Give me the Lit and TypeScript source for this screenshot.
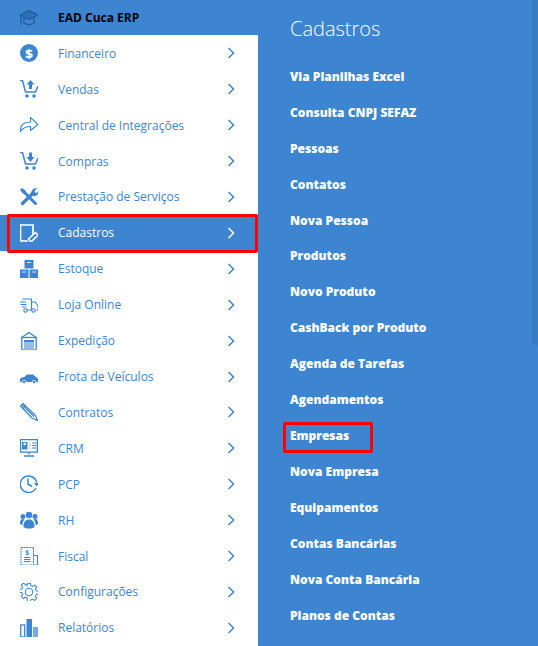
import { LitElement, html, css, svg } from "lit";
import { customElement } from "lit/decorators.js";

const B = "#3d85d1";
const icons: Record<string, unknown> = {
  cap: svg`<g fill="none" stroke="#1f5c9e" stroke-width="1.300"><path d="M1 7 10 2.500 19 7l-9 4.500z" fill="#2f6fb5"/><path d="M5 10v5c3 2 7 2 10 0V10"/><path d="M2 8v9"/></g>`,
  dollar: svg`<circle cx="10" cy="10" r="9" fill="${B}"/><text x="10" y="14.500" text-anchor="middle" font-family="Open Sans" font-weight="800" font-size="13" fill="#fff">$</text>`,
  cartUp: svg`<g fill="none" stroke="${B}" stroke-width="1.500"><path d="M1 1.500h2.500l3 11.500h10L19 7"/></g><path d="M11.500 1 7.500 5.500H10V10h3V5.500h2.500z" fill="${B}"/><circle cx="8" cy="17" r="1.800" fill="${B}"/><circle cx="15" cy="17" r="1.800" fill="${B}"/>`,
  cartDown: svg`<g fill="none" stroke="${B}" stroke-width="1.500"><path d="M1 1.500h2.500l3 11.500h10L19 7"/></g><path d="M11.500 11 7.500 6H10V1.500h3V6h2.500z" fill="${B}"/><circle cx="8" cy="17" r="1.800" fill="${B}"/><circle cx="15" cy="17" r="1.800" fill="${B}"/>`,
  share: svg`<path d="M1 17C1 10.500 5 7 11.500 7V2.500L19 9.500 11.500 15.500V11.500C6.500 11.500 3.500 13 1 17Z" fill="none" stroke="${B}" stroke-width="1.100" stroke-linejoin="round"/>`,
  tools: svg`<g stroke="${B}" fill="none" stroke-linecap="round"><path d="M3.500 16.500 14 6" stroke-width="3.200"/><path d="M4 4l12.500 12.500" stroke-width="3"/></g><path d="M12.500 6.500C12 3 15 .5 18 1.500L15.500 4l.5 1.500 1.500.5L19.500 3.500c1 3-2 6.500-5 5.500zM1 3l2-2 4 3-1 2-2 .5z" fill="${B}"/>`,
  edit: svg`<g fill="none" stroke="#fff" stroke-width="1.700"><path d="M14 12V2H1.500v16H9"/><path d="M11.500 18.500l-2-2.500 7-6.500 2.500 2.500-6.500 6.500z" stroke-linejoin="round"/></g>`,
  boxes: svg`<g fill="${B}"><rect x="5.500" y="1" width="9" height="8.500"/><rect x="1" y="10.500" width="8.500" height="8.500"/><rect x="10.500" y="10.500" width="8.500" height="8.500"/></g><g stroke="#d6e6f7"><path d="M8 3.500h4M3 13h4M13 13h4"/></g>`,
  truck: svg`<g fill="none" stroke="${B}" stroke-width="1.100"><path d="M3.500 4h9v11H8M12.500 7h3.500l3 3.500V15h-1.500M12.500 15H12"/><path d="M1 7h6M1.500 9.500h6M3 12h4"/><circle cx="6.500" cy="15.500" r="1.700"/><circle cx="14.500" cy="15.500" r="1.700"/></g>`,
  garage: svg`<g fill="none" stroke="${B}" stroke-width="1.300"><path d="M2 7 10 1.500 18 7"/><rect x="2.800" y="6.500" width="14.400" height="12.500"/></g><rect x="5" y="9" width="10" height="2.500" fill="${B}"/><rect x="5" y="12" width="10" height="6" fill="${B}" opacity=".55"/>`,
  car: svg`<path d="M1 15v-2.500C1 11 3 10.500 5 10.300L8 7.500h6l3.500 3c1.500.3 1.500 1 1.500 2V15z" fill="${B}"/><circle cx="5" cy="15" r="1.700" fill="${B}" stroke="#fff" stroke-width=".7"/><circle cx="15" cy="15" r="1.700" fill="${B}" stroke="#fff" stroke-width=".7"/>`,
  pen: svg`<g fill="none" stroke="${B}" stroke-width="1.200" stroke-linejoin="round"><path d="M1.500 4 4 1.500 16 13l3 6-6-3z"/><path d="M3.500 7 6.500 4M3 2.800 15 14.500"/></g>`,
  crm: svg`<g fill="none" stroke="${B}" stroke-width="1.300"><rect x="1.600" y="1.600" width="16.800" height="12.500"/><path d="M10 14v2.500M5 18h10"/></g><rect x="3" y="4" width="5.500" height="7.500" fill="${B}"/><circle cx="5.700" cy="6" r="1.300" fill="#fff"/><path d="M10.500 5h1M13 5h4.500M10.500 7.500h1M13 7.500h4.500M10.500 10h1M13 10h4.500" stroke="${B}"/>`,
  clock: svg`<g fill="none" stroke="${B}" stroke-width="1.500"><path d="M17.700 8.500A8.300 8.300 0 1 0 17 14"/><path d="M9 4.500V10l4 2.500"/></g><path d="M15 9h5l-2.500 3.500z" fill="${B}"/>`,
  users: svg`<g fill="${B}"><circle cx="10" cy="5" r="3.200"/><circle cx="4" cy="6.500" r="2.500"/><circle cx="16" cy="6.500" r="2.500"/><path d="M4.500 17c0-5.500 2-7.500 5.500-7.500s5.500 2 5.500 7.500c-3 2-8 2-11 0z"/><path d="M1 14c0-3.500.8-5 2.700-5 .8 0 1.300.2 1.800.5C4 11 3.500 12.500 3.500 15 2.500 15 1.800 14.700 1 14zM19 14c0-3.500-.8-5-2.700-5-.8 0-1.300.2-1.800.5 1.500 1.500 2 3 2 5.500 1 0 1.700-.3 2.500-1z"/></g>`,
  fiscal: svg`<g fill="none" stroke="${B}" stroke-width="1"><path d="M2 1.500h12.500v17.500H2z" stroke-dasharray="2 .6"/><path d="M14.500 9.500h4v9.500h-4"/><path d="M5 11.500h6.500M5 13.500h6.500M5 15.500h6.500"/></g><text x="8.200" y="9" text-anchor="middle" font-size="6.500" font-family="Open Sans" font-weight="700" fill="${B}">$</text>`,
  gear: svg`<g fill="none" stroke="${B}" stroke-width="1.100"><circle cx="10" cy="10" r="3.700"/><path d="M8.500 1h3l.5 2.500 1.800.8 2.200-1.400 2.100 2.100-1.400 2.200.8 1.800 2.500.5v3l-2.500.5-.8 1.800 1.400 2.200-2.100 2.100-2.200-1.400-1.800.8-.5 2.500h-3L8 16.500l-1.800-.8L4 17.100 1.900 15l1.400-2.200-.8-1.800L0 10.500v-3l2.500-.5.8-1.800L1.900 3 4 .9l2.200 1.400L8 3.500z" transform="translate(.5 .3) scale(.95)"/></g>`,
  bars: svg`<rect x="1.700" y="7" width="4" height="12" fill="none" stroke="${B}" stroke-width="1.300"/><rect x="7.500" y="1" width="5.500" height="18" fill="${B}"/><rect x="14" y="9" width="5" height="10" fill="${B}" opacity=".7"/>`,
};

const menu: [string, string][] = [
  ["dollar", "Financeiro"],
  ["cartUp", "Vendas"],
  ["share", "Central de Integrações"],
  ["cartDown", "Compras"],
  ["tools", "Prestação de Serviços"],
  ["edit", "Cadastros"],
  ["boxes", "Estoque"],
  ["truck", "Loja Online"],
  ["garage", "Expedição"],
  ["car", "Frota de Veículos"],
  ["pen", "Contratos"],
  ["crm", "CRM"],
  ["clock", "PCP"],
  ["users", "RH"],
  ["fiscal", "Fiscal"],
  ["gear", "Configurações"],
  ["bars", "Relatórios"],
];

const sub = [
  "Via Planilhas Excel", "Consulta CNPJ SEFAZ", "Pessoas", "Contatos", "Nova Pessoa",
  "Produtos", "Novo Produto", "CashBack por Produto", "Agenda de Tarefas", "Agendamentos",
  "Empresas", "Nova Empresa", "Equipamentos", "Contas Bancárias", "Nova Conta Bancária", "Planos de Contas",
];

@customElement("app-root")
export class AppRoot extends LitElement {
  static styles = css`
    :host {
      display: block;
      width: 538px;
      height: 646px;
      overflow: hidden;
      font-family: "Open Sans", sans-serif;
    }
    .page {
      display: grid;
      grid-template-columns: 258px 1fr;
      height: 646px;
    }
    .side {
      background: #fff;
      display: flex;
      flex-direction: column;
    }
    .head {
      height: 35px;
      margin-bottom: 0.4px;
      flex: none;
      background: #3d85d1;
      display: flex;
      align-items: center;
      padding-left: 20px;
      box-sizing: border-box;
    }
    .head svg { width: 18px; height: 18px; margin-right: 20px; flex: none; }
    .head span { font-size: 12px; font-weight: 700; color: #000; }
    .row {
      height: 35.91px;
      flex: none;
      display: flex;
      align-items: center;
      padding-left: 20px;
      box-sizing: border-box;
      color: #3d85d1;
      font-size: 12px;
      position: relative;
    }
    .row svg.ic { width: 18px; height: 18px; margin-right: 20px; flex: none; }
    .row.on { background: #3d85d1; color: #fff; }
    .chev {
      position: absolute;
      left: 226.5px;
      top: 50%;
      margin-top: -6px;
      width: 8px;
      height: 12px;
      fill: none;
      stroke: currentColor;
      stroke-width: 1.5;
    }
    .outline {
      position: absolute;
      left: 7px;
      top: -1.4px;
      width: 251px;
      height: 39px;
      border: 3px solid #f00;
      border-radius: 2px;
      box-sizing: border-box;
    }
    .panel {
      background: #3d85d1;
      padding: 15px 0 0 32px;
      box-sizing: border-box;
      position: relative;
      overflow: hidden;
    }
    .track {
      position: absolute;
      right: 0;
      top: 0;
      width: 6px;
      height: 345px;
      background: #3a7cc2;
    }
    h2 {
      margin: 0 0 15.5px;
      font-size: 20px;
      line-height: 28px;
      font-weight: 300;
      color: #fff;
    }
    .panel ul { margin: 0; padding: 0; list-style: none; }
    .panel li {
      height: 35.91px;
      display: flex;
      align-items: center;
      font-size: 12px;
      font-weight: 800;
      color: #fff;
      position: relative;
    }
    .box {
      position: absolute;
      left: -7px;
      top: 4.4px;
      width: 90px;
      height: 31px;
      border: 3px solid #f00;
      border-radius: 2px;
      box-sizing: border-box;
    }
  `;

  render() {
    return html`
      <div class="page">
        <nav class="side">
          <div class="head">
            <svg viewBox="1 1 18 18">${icons.cap}</svg><span>EAD Cuca ERP</span>
          </div>
          ${menu.map(
            ([ic, label]) => html`
              <div class="row ${label === "Cadastros" ? "on" : ""}">
                <svg class="ic" viewBox="1 1 18 18">${icons[ic]}</svg>
                <span>${label}</span>
                <svg class="chev" viewBox="0 0 8 12"><path d="M1.500 1 6.500 6 1.500 11" /></svg>
                ${label === "Cadastros" ? html`<div class="outline"></div>` : ""}
              </div>
            `
          )}
        </nav>
        <section class="panel">
          <div class="track"></div>
          <h2>Cadastros</h2>
          <ul>
            ${sub.map(
              (s) => html`<li>${s}${s === "Empresas" ? html`<div class="box"></div>` : ""}</li>`
            )}
          </ul>
        </section>
      </div>
    `;
  }
}
